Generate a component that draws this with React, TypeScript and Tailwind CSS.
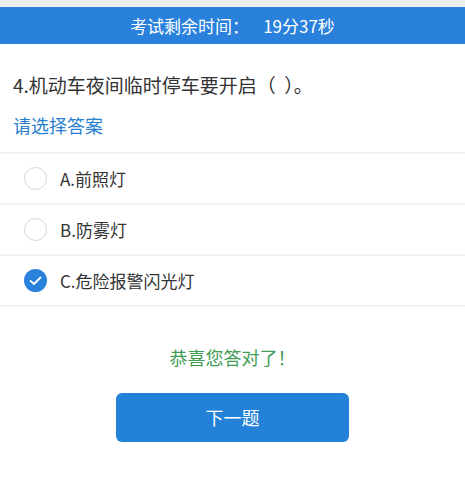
import React from 'react';

const options = [
  { key: 'A', text: 'A.前照灯', checked: false },
  { key: 'B', text: 'B.防雾灯', checked: false },
  { key: 'C', text: 'C.危险报警闪光灯', checked: true },
];

export default function App() {
  return (
    <div
      className="w-[465px] h-[477px] bg-white overflow-hidden"
      style={{ fontFamily: '"Noto Sans CJK SC", "Noto Sans", sans-serif' }}
    >
      <div className="h-[7px] bg-[#eceeec]" />
      <div className="h-[37px] bg-[#2a81dc] flex items-center justify-center text-white text-[17px]">
        <span>考试剩余时间：</span>
        <span className="ml-[14px]">19分37秒</span>
      </div>

      <div className="px-[13px] pt-[27px] text-[19px] leading-[28px] text-[#333]">
        4.机动车夜间临时停车要开启（&nbsp;&nbsp;）。
      </div>
      <div className="px-[13px] pt-[13px] text-[18px] leading-[26px] text-[#2a7fcf]">请选择答案</div>

      <div className="mt-[14px] border-t-2 border-[#f2f2f2]">
        {options.map(o => (
          <div key={o.key} className="h-[51px] flex items-center border-b-2 border-[#f2f2f2]">
            <div className="ml-[24px] w-[23px] h-[23px] shrink-0">
              {o.checked ? (
                <svg width="23" height="23" viewBox="0 0 23 23">
                  <circle cx="11.5" cy="11.5" r="11.5" fill="#2a81dc" />
                  <path d="M6.5 11.8 L10 15 L16.5 8.5" fill="none" stroke="#fff" strokeWidth="1.8" strokeLinecap="round" strokeLinejoin="round" />
                </svg>
              ) : (
                <div className="w-[23px] h-[23px] rounded-full border border-[#d6d6d6]" />
              )}
            </div>
            <span className="ml-[13px] text-[17px] text-[#333]">{o.text}</span>
          </div>
        ))}
      </div>

      <div className="mt-[37px] text-center text-[18px] leading-[26px] text-[#3f9c55]">恭喜您答对了！</div>

      <div className="flex justify-center mt-[23px]">
        <button className="w-[233px] h-[49px] rounded-[6px] bg-[#2382d8] text-white text-[18px]">下一题</button>
      </div>
    </div>
  );
}
